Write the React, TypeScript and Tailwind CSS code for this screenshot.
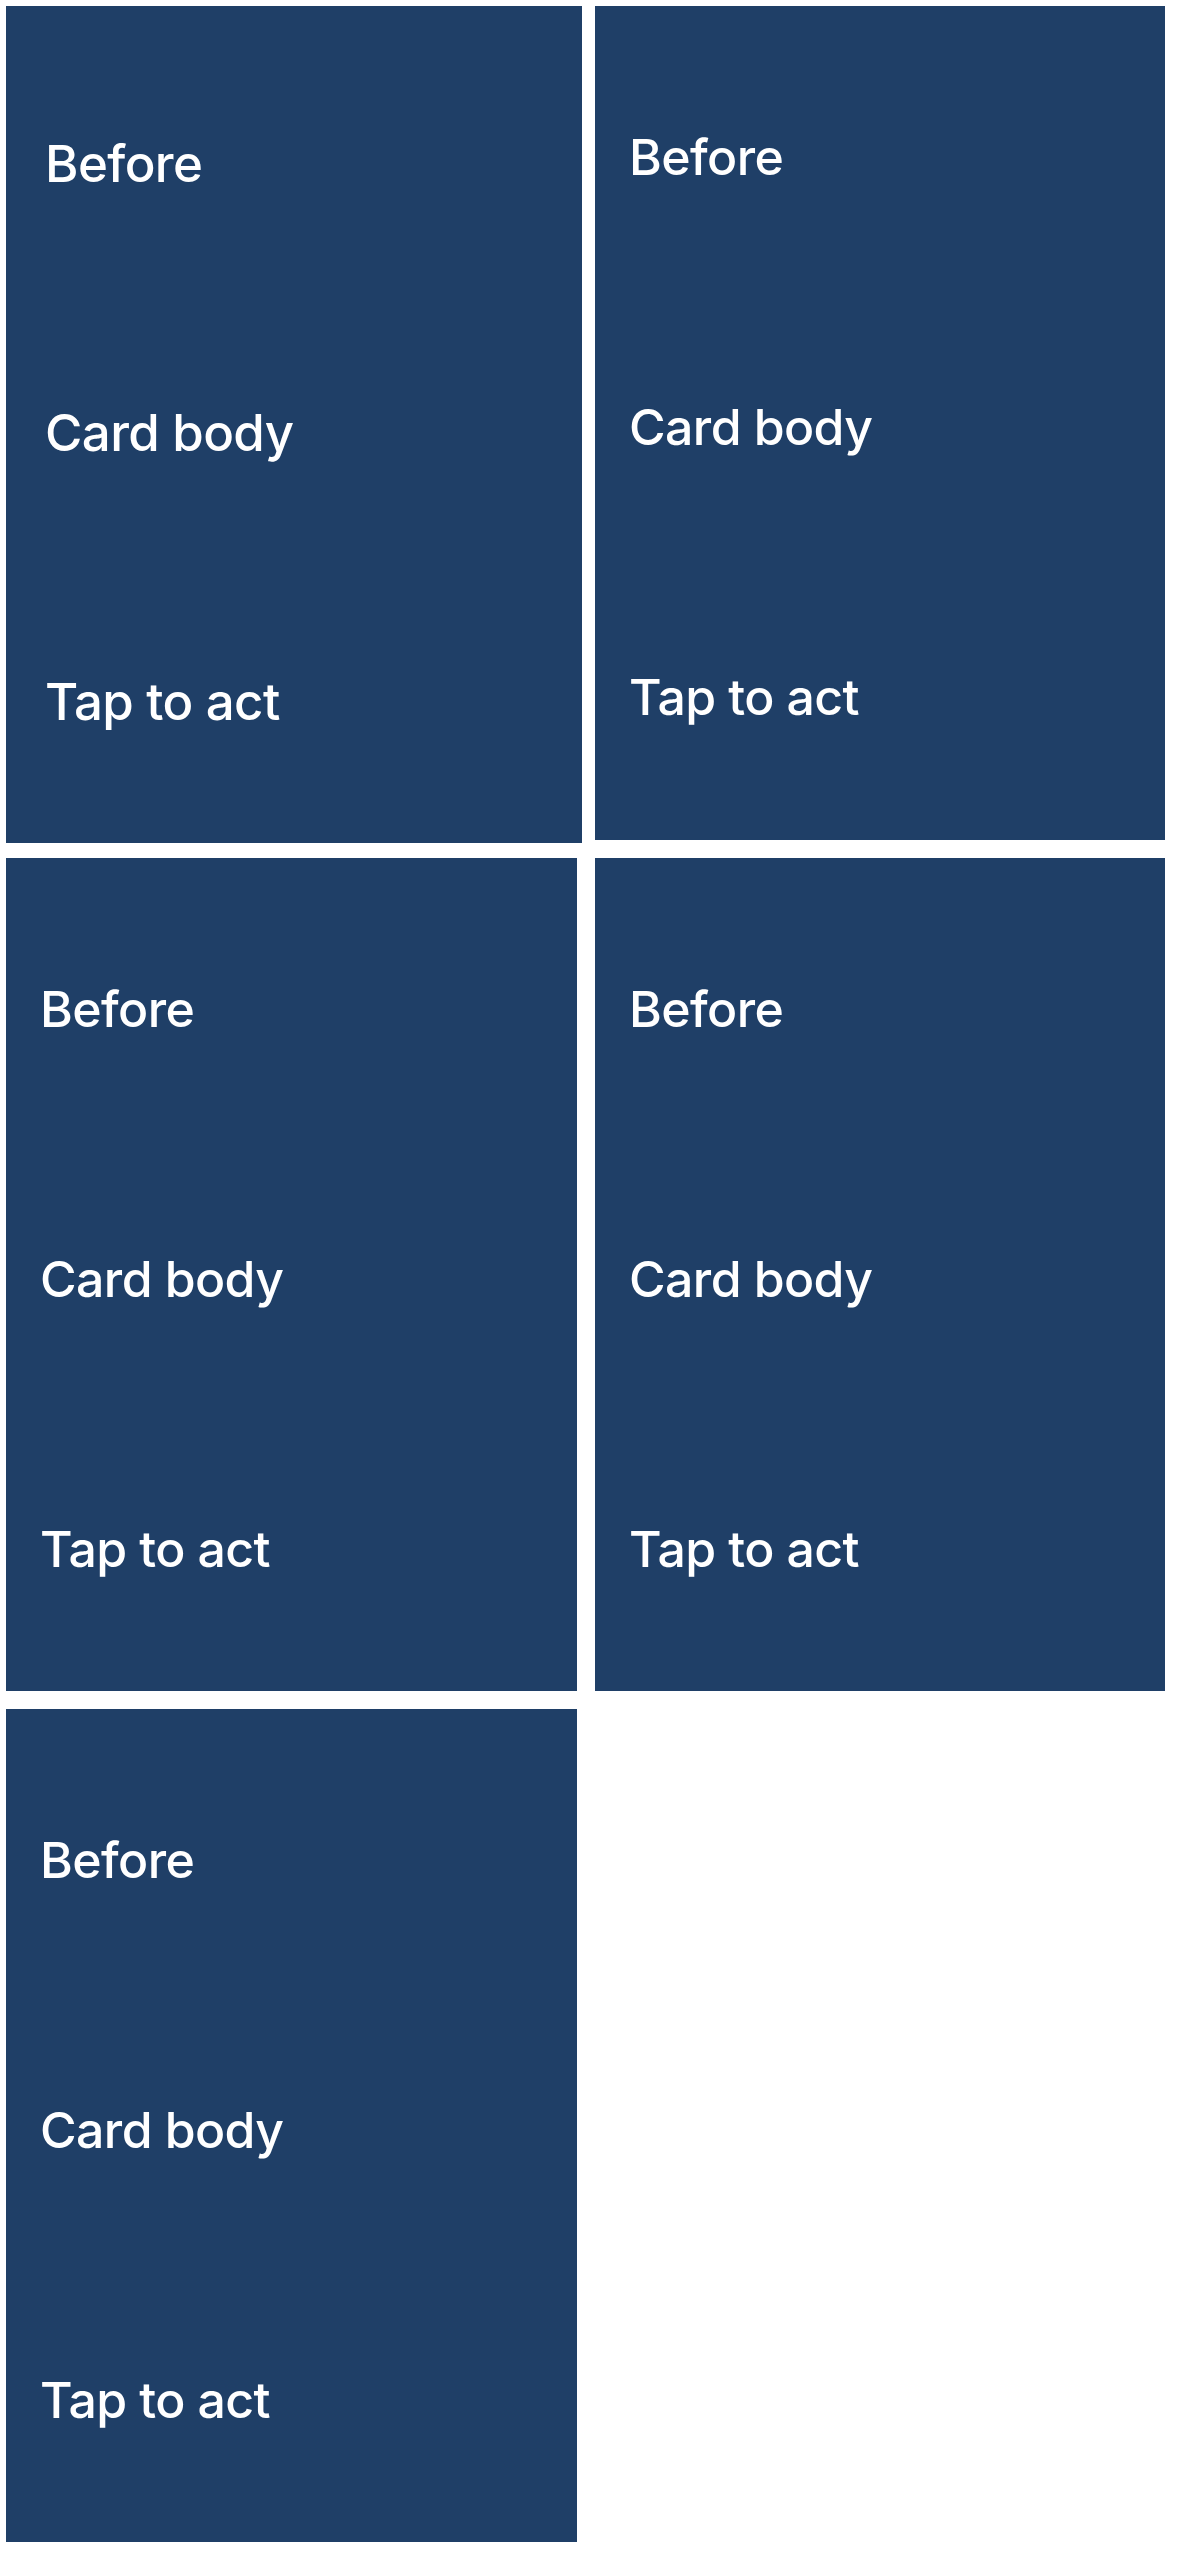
import React from "react";

function Card({ first = false }: { first?: boolean }) {
  const items = ["Before", "Card body", "Tap to act"];
  if (first) {
    return (
      <div className="w-[576px] h-[837px] mr-[-5px] mb-[-3px] bg-[#1f3f67] flex flex-col gap-[209px] pt-[128px] pl-[39px] text-white">
        {items.map((t) => (
          <div key={t} className="text-[51px] leading-[60px] font-medium tracking-[-0.6px]">{t}</div>
        ))}
      </div>
    );
  }
  return (
    <div className="w-full h-full bg-[#1f3f67] flex flex-col gap-[210px] pt-[121px] pl-[34px] text-white">
      {items.map((t) => (
        <div key={t} className="text-[50px] leading-[60px] font-medium tracking-[-0.6px]">{t}</div>
      ))}
    </div>
  );
}

export default function App() {
  return (
    <div
      className="w-[1179px] min-h-[2556px] bg-white p-[6px]"
      style={{ fontFamily: "Inter, 'Noto Sans', sans-serif" }}
    >
      <div className="grid grid-cols-[571px_570px] grid-rows-[834px_833px_833px] gap-x-[18px] gap-y-[18px]">
        <Card first />
        <Card />
        <Card />
        <Card />
        <Card />
      </div>
    </div>
  );
}
